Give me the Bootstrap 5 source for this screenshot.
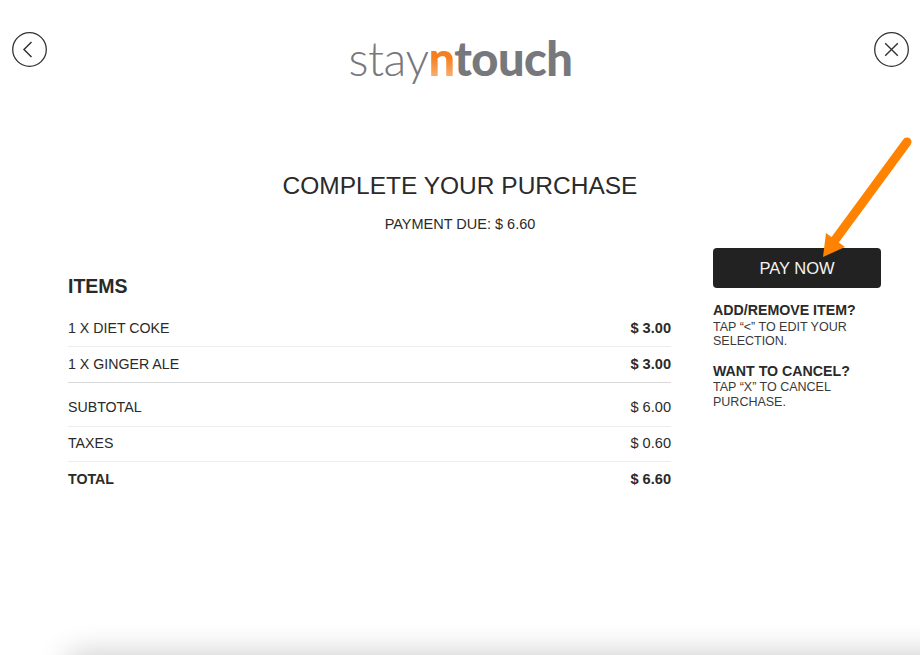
<!DOCTYPE html>
<html lang="en">
<head>
    <meta charset="UTF-8">
    <meta name="viewport" content="width=device-width, initial-scale=1.0">
    <title>Complete your purchase</title>
    <link href="https://cdn.jsdelivr.net/npm/bootstrap@5.3.0/dist/css/bootstrap.min.css" rel="stylesheet">
    <style>
        html, body { height: 100%; }
        body {
            font-family: "Liberation Sans", Arial, sans-serif;
            color: #2a2a2a;
            background: #fff;
            overflow: hidden;
        }
        .kiosk-page {
            position: relative;
            width: 920px;
            height: 655px;
            overflow: hidden;
        }
        .top-bar {
            height: 160px;
            padding: 32px 11px 0 12px;
        }
        .round-btn {
            width: 35px;
            height: 35px;
            padding: 0;
            border: 0;
            background: none;
            line-height: 0;
        }
        .brand-logo {
            font-family: Lato, sans-serif;
            font-size: 47px;
            line-height: 56px;
            letter-spacing: -0.5px;
            color: #77787b;
            margin-top: -2px;
        }
        .brand-logo .thin { font-weight: 300; }
        .brand-logo b { font-weight: 900; }
        .brand-logo .brand-n {
            background: linear-gradient(180deg, #f57f20 50%, #fbc597 100%);
            -webkit-background-clip: text;
            background-clip: text;
            color: transparent;
        }
        .page-title {
            font-size: 24.5px;
            line-height: 30px;
            margin: 11px 0 0;
            font-weight: 400;
        }
        .due-line {
            font-size: 14.5px;
            line-height: 18px;
            margin: 14px 0 0;
        }
        .order-area {
            padding: 0 39px 0 68px;
            gap: 42px;
        }
        .items-col { width: 603px; padding-top: 42px; }
        .items-title {
            font-size: 19.5px;
            line-height: 22px;
            font-weight: 700;
            margin: 0 0 14px;
        }
        .line-row {
            font-size: 14.2px;
            line-height: 18px;
            padding: 8px 0 9px;
            border-bottom: 1px solid #ececec;
        }
        .line-row.group-end { border-bottom-color: #d8d8d8; }
        .line-row.group-start { padding-top: 15px; padding-bottom: 10px; }
        .line-row.tax-row { padding-top: 7px; }
        .line-row.no-rule { border-bottom: 0; }
        .amount { font-size: 14.6px; }
        .side-col { width: 168px; padding-top: 15px; }
        .pay-btn {
            height: 40px;
            background: #222;
            border: 0;
            border-radius: 4px;
            color: #f4f4f4;
            font-size: 16.5px;
            line-height: 40px;
            padding: 0;
            margin-bottom: 15px;
        }
        .help-title {
            font-size: 14.2px;
            line-height: 15px;
            font-weight: 700;
            margin: 0 0 1.5px;
        }
        .help-text {
            font-size: 12.5px;
            line-height: 14.5px;
            color: #3a3a3a;
            margin: 0 0 15px;
        }
        .callout-arrow {
            position: absolute;
            left: 815px;
            top: 130px;
            width: 105px;
            height: 130px;
        }
        .bottom-shade {
            position: absolute;
            left: 70px;
            right: -40px;
            bottom: -30px;
            height: 30px;
            box-shadow: 0 0 30px 2px rgba(0, 0, 0, 0.2);
        }
    </style>
</head>
<body>
    <div class="kiosk-page">
        <!-- Header -->
        <div class="top-bar d-flex justify-content-between align-items-start">
            <button class="round-btn" type="button" aria-label="Back">
                <svg width="35" height="35" viewBox="0 0 35 35" fill="none" stroke="#333" stroke-width="1.3">
                    <circle cx="17.5" cy="17.5" r="16.8"/>
                    <path d="M19.5 10 L12 17.5 L19.5 25" stroke-width="1.5"/>
                </svg>
            </button>
            <div class="brand-logo"><span class="thin">stay</span><b class="brand-n">n</b><b>touch</b></div>
            <button class="round-btn" type="button" aria-label="Close">
                <svg width="35" height="35" viewBox="0 0 35 35" fill="none" stroke="#333" stroke-width="1.3">
                    <circle cx="17.5" cy="17.5" r="16.8"/>
                    <path d="M11.2 11.2 L23.8 23.8 M23.8 11.2 L11.2 23.8" stroke-width="1.4"/>
                </svg>
            </button>
        </div>

        <div class="text-center">
            <h1 class="page-title">COMPLETE YOUR PURCHASE</h1>
            <p class="due-line">PAYMENT DUE: $ 6.60</p>
        </div>

        <!-- Order -->
        <div class="order-area d-flex align-items-start">
            <div class="items-col">
                <h2 class="items-title">ITEMS</h2>
                <div class="line-row d-flex justify-content-between"><span>1 X DIET COKE</span><strong class="amount">$ 3.00</strong></div>
                <div class="line-row group-end d-flex justify-content-between"><span>1 X GINGER ALE</span><strong class="amount">$ 3.00</strong></div>
                <div class="line-row group-start d-flex justify-content-between"><span>SUBTOTAL</span><span class="amount">$ 6.00</span></div>
                <div class="line-row tax-row d-flex justify-content-between"><span>TAXES</span><span class="amount">$ 0.60</span></div>
                <div class="line-row no-rule d-flex justify-content-between"><strong>TOTAL</strong><strong class="amount">$ 6.60</strong></div>
            </div>
            <div class="side-col">
                <button class="btn pay-btn w-100" type="button">PAY NOW</button>
                <p class="help-title">ADD/REMOVE ITEM?</p>
                <p class="help-text">TAP “&lt;” TO EDIT YOUR SELECTION.</p>
                <p class="help-title">WANT TO CANCEL?</p>
                <p class="help-text">TAP “X” TO CANCEL PURCHASE.</p>
            </div>
        </div>

        <!-- Annotation over the button -->
        <svg class="callout-arrow" viewBox="0 0 105 130" fill="#ff8200">
            <path d="M92 12 L20 110" stroke="#ff8200" stroke-width="9" stroke-linecap="round" fill="none"/>
            <path d="M8 127 L11 103 L30 117 Z"/>
        </svg>
        <div class="bottom-shade"></div>
    </div>
</body>
</html>
